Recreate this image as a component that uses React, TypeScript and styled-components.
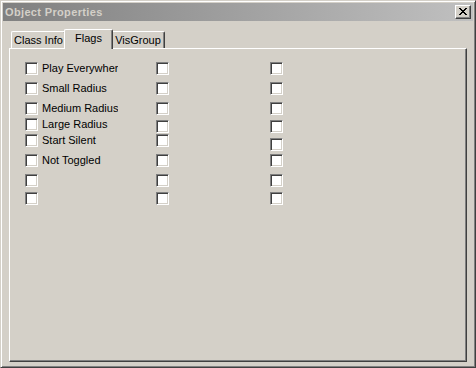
import React from "react";
import styled, { createGlobalStyle } from "styled-components";

const Global = createGlobalStyle`
  html, body { margin: 0; padding: 0; background: #d4d0c8; }
  * { box-sizing: border-box; }
`;

const Window = styled.div`
  width: 476px;
  height: 368px;
  display: flex;
  flex-direction: column;
  background: #d4d0c8;
  border: 1px solid;
  border-color: #d4d0c8 #404040 #404040 #d4d0c8;
  box-shadow: inset 1px 1px #ffffff, inset -1px -1px #808080;
  padding: 2px;
  font-family: "Liberation Sans", Arial, sans-serif;
  font-size: 11px;
  color: #000;
`;

const TitleBar = styled.div`
  height: 18px;
  display: flex;
  align-items: center;
  justify-content: space-between;
  padding: 0 2px 0 2px;
  background: linear-gradient(to right, #808080, #c0c0c0);
`;

const Title = styled.span`
  font-weight: bold;
  font-size: 11px;
  color: #d4d0c8;
  letter-spacing: 0.35px;
`;

const CloseButton = styled.div`
  width: 16px;
  height: 14px;
  background: #d4d0c8;
  border: 1px solid;
  border-color: #ffffff #404040 #404040 #ffffff;
  box-shadow: inset -1px -1px #808080;
  display: flex;
  align-items: center;
  justify-content: center;
  padding: 0 1px 1px 0;
`;

const Body = styled.div`
  flex: 1;
  display: flex;
  flex-direction: column;
  padding: 8px 6px 3px 6px;
`;

const TabStrip = styled.div`
  height: 19px;
  display: flex;
  align-items: flex-start;
  padding-left: 2px;
`;

const Tab = styled.div<{ $w: number; $active?: boolean }>`
  position: relative;
  width: ${(p) => (p.$active ? p.$w + 4 : p.$w)}px;
  height: ${(p) => (p.$active ? 20 : 17)}px;
  margin: ${(p) => (p.$active ? "0 -2px 0 -2px" : "2px 0 0 0")};
  z-index: ${(p) => (p.$active ? 2 : 1)};
  background: #d4d0c8;
  border-top: 1px solid #ffffff;
  border-left: 1px solid #ffffff;
  border-right: 1px solid #404040;
  border-top-left-radius: 2px;
  border-top-right-radius: 2px;
  box-shadow: inset -1px 0 #808080;
  display: flex;
  justify-content: center;
  align-items: flex-start;
  padding-top: 2px;
  line-height: 13px;
  white-space: nowrap;
`;

const Panel = styled.div`
  flex: 1;
  border: 1px solid;
  border-color: #ffffff #404040 #404040 #ffffff;
  box-shadow: inset -1px -1px #808080;
  padding: 13px 0 0 15px;
  display: flex;
  align-items: flex-start;
`;

const Column = styled.div<{ $w: number }>`
  width: ${(p) => p.$w}px;
  display: flex;
  flex-direction: column;
`;

const Item = styled.div<{ $mt: number }>`
  display: flex;
  align-items: center;
  height: 13px;
  margin-top: ${(p) => p.$mt}px;
`;

const Box = styled.div`
  width: 13px;
  height: 13px;
  flex: none;
  background: #ffffff;
  border: 1px solid;
  border-color: #808080 #ffffff #ffffff #808080;
  box-shadow: inset 1px 1px #404040, inset -1px -1px #d4d0c8;
`;

const Label = styled.span`
  margin-left: 4px;
  width: 76px;
  overflow: hidden;
  white-space: nowrap;
  line-height: 13px;
`;

const CloseGlyph = () => (
  <svg width="8" height="7" viewBox="0 0 8 7" shapeRendering="crispEdges">
    <path
      fill="#000"
      d="M0 0h2v1H0z M6 0h2v1H6z M1 1h2v1H1z M5 1h2v1H5z M2 2h4v1H2z M3 3h2v1H3z M2 4h4v1H2z M1 5h2v1H1z M5 5h2v1H5z M0 6h2v1H0z M6 6h2v1H6z"
    />
  </svg>
);

const tops = [
  [62, 82, 102, 118, 134, 154, 174, 192],
  [62, 82, 102, 120, 134, 154, 174, 192],
  [62, 82, 102, 120, 138, 154, 174, 192],
];

const labels = [
  "Play Everywhere",
  "Small Radius",
  "Medium Radius",
  "Large Radius",
  "Start Silent",
  "Not Toggled",
  "",
  "",
];

const widths = [131, 114, 100];

export default function App() {
  return (
    <>
      <Global />
      <Window>
        <TitleBar>
          <Title>Object Properties</Title>
          <CloseButton>
            <CloseGlyph />
          </CloseButton>
        </TitleBar>
        <Body>
          <TabStrip>
            <Tab $w={55}>Class Info</Tab>
            <Tab $w={45} $active>
              Flags
            </Tab>
            <Tab $w={54}>VisGroup</Tab>
          </TabStrip>
          <Panel>
            {tops.map((col, ci) => (
              <Column key={ci} $w={widths[ci]}>
                {col.map((t, ri) => (
                  <Item key={ri} $mt={ri === 0 ? 0 : t - col[ri - 1] - 13}>
                    <Box />
                    {ci === 0 && labels[ri] ? <Label>{labels[ri]}</Label> : null}
                  </Item>
                ))}
              </Column>
            ))}
          </Panel>
        </Body>
      </Window>
    </>
  );
}
